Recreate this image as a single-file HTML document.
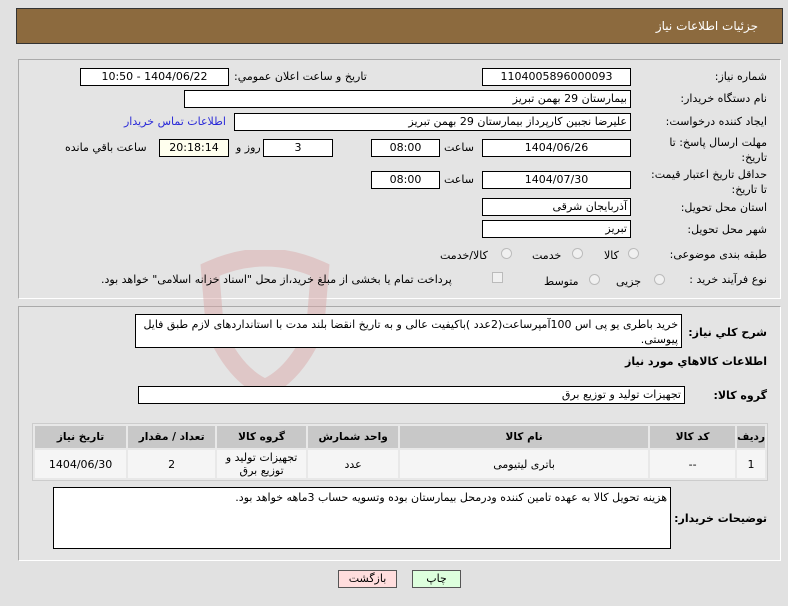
<!DOCTYPE html><html><head><meta charset="utf-8"><style>
*{margin:0;padding:0;box-sizing:border-box}
body{width:788px;height:606px;background:#e1e1e1;font-family:"DejaVu Sans","Liberation Sans",sans-serif;font-size:11px;color:#000;position:relative;overflow:hidden}
.a{position:absolute;white-space:nowrap}
.hdr{left:16px;top:8px;width:767px;height:36px;background:#8c6a3e;border:1px solid #333}
.hdr span{position:absolute;right:24px;top:10px;color:#fff;font-size:12px}
.pn{border:1px solid #aaa;border-right-color:#fff;border-bottom-color:#fff;background:#e4e4e4}
.bx{position:absolute;background:#fff;border:1px solid #000;height:18px;line-height:16px;text-align:center;direction:rtl;white-space:nowrap;overflow:hidden}
.r{text-align:right;padding-right:3px}
.l{direction:rtl;text-align:right}
.b{font-weight:bold;font-size:11px}
.rd{position:absolute;width:11px;height:11px;border-radius:50%;border:1px solid #bbb;background:#f0f0f0}
table{border-collapse:separate;border-spacing:2px;position:absolute;left:32px;top:423px;width:736px;background:#e8e8e8;border:1px solid #ccc;direction:rtl}
th{background:#c8c8c8;height:22px;font-weight:bold;font-size:10.5px}
td{background:#f5f5f5;height:28px;text-align:center;font-size:11px;line-height:13px}
.btn{position:absolute;top:570px;height:18px;border:1px solid #555;text-align:center;line-height:16px}
</style></head><body>
<div class="a hdr"><span>جزئیات اطلاعات نیاز</span></div>
<div class="a pn" style="left:18px;top:59px;width:763px;height:240px"></div>
<div class="a pn" style="left:18px;top:306px;width:763px;height:255px"></div>
<svg class="a" style="left:200px;top:250px" width="130" height="140"><path d="M10 20 Q65 -5 120 20 L115 80 Q95 125 65 138 Q35 125 15 80 Z" fill="none" stroke="#d9a3a3" stroke-width="18" opacity=".45"/></svg>

<div class="a l" style="right:21px;top:70px">شماره نیاز:</div>
<div class="bx" style="left:482px;top:68px;width:149px">1104005896000093</div>
<div class="a l" style="left:234px;top:70px">تاریخ و ساعت اعلان عمومي:</div>
<div class="bx" style="left:80px;top:68px;width:149px">1404/06/22 - 10:50</div>

<div class="a l" style="right:21px;top:92px">نام دستگاه خریدار:</div>
<div class="bx r" style="left:184px;top:90px;width:447px">بیمارستان 29 بهمن تبریز</div>

<div class="a l" style="right:21px;top:115px">ایجاد کننده درخواست:</div>
<div class="bx r" style="left:234px;top:113px;width:397px">علیرضا نجبین کارپرداز بیمارستان 29 بهمن تبریز</div>
<div class="a l" style="left:124px;top:115px;color:#2a2ad8">اطلاعات تماس خریدار</div>

<div class="a l" style="right:21px;top:136px">مهلت ارسال پاسخ: تا</div>
<div class="a l" style="right:21px;top:151px">تاریخ:</div>
<div class="bx" style="left:482px;top:139px;width:149px">1404/06/26</div>
<div class="a l" style="left:444px;top:141px">ساعت</div>
<div class="bx" style="left:371px;top:139px;width:69px">08:00</div>
<div class="bx" style="left:263px;top:139px;width:70px">3</div>
<div class="a l" style="left:236px;top:141px">روز و</div>
<div class="bx" style="left:159px;top:139px;width:70px;background:#ffffee">20:18:14</div>
<div class="a l" style="left:65px;top:141px">ساعت باقي مانده</div>

<div class="a l" style="right:21px;top:168px">حداقل تاریخ اعتبار قیمت:</div>
<div class="a l" style="right:21px;top:183px">تا تاریخ:</div>
<div class="bx" style="left:482px;top:171px;width:149px">1404/07/30</div>
<div class="a l" style="left:444px;top:173px">ساعت</div>
<div class="bx" style="left:371px;top:171px;width:69px">08:00</div>

<div class="a l" style="right:21px;top:201px">استان محل تحویل:</div>
<div class="bx r" style="left:482px;top:198px;width:149px">آذربایجان شرقی</div>
<div class="a l" style="right:21px;top:223px">شهر محل تحویل:</div>
<div class="bx r" style="left:482px;top:220px;width:149px">تبریز</div>

<div class="a l" style="right:21px;top:248px">طبقه بندی موضوعی:</div>
<div class="rd" style="left:628px;top:248px"></div><div class="a l" style="left:604px;top:249px">کالا</div>
<div class="rd" style="left:572px;top:248px"></div><div class="a l" style="left:532px;top:249px">خدمت</div>
<div class="rd" style="left:501px;top:248px"></div><div class="a l" style="left:440px;top:249px">کالا/خدمت</div>

<div class="a l" style="right:21px;top:273px">نوع فرآیند خرید :</div>
<div class="rd" style="left:654px;top:274px"></div><div class="a l" style="left:616px;top:275px">جزیی</div>
<div class="rd" style="left:589px;top:274px"></div><div class="a l" style="left:544px;top:275px">متوسط</div>
<div class="a" style="left:492px;top:272px;width:11px;height:11px;border:1px solid #bbb;background:#f0f0f0"></div>
<div class="a l" style="left:101px;top:273px">پرداخت تمام یا بخشی از مبلغ خرید،از محل "اسناد خزانه اسلامی" خواهد بود.</div>

<div class="a l b" style="right:21px;top:326px">شرح کلي نیاز:</div>
<div class="a" style="left:135px;top:314px;width:547px;height:34px;background:#fff;border:1px solid #000;direction:rtl;text-align:right;padding:2px 3px;line-height:15px;white-space:normal">خرید باطری یو پی اس 100آمپرساعت(2عدد )باکیفیت عالی و به تاریخ  انقضا بلند مدت با استانداردهای لازم طبق فایل پیوستی.</div>
<div class="a l b" style="right:21px;top:355px">اطلاعات کالاهاي مورد نیاز</div>
<div class="a l b" style="right:21px;top:389px">گروه کالا:</div>
<div class="bx r" style="left:138px;top:386px;width:547px">تجهیزات تولید و توزیع برق</div>

<table><tr><th style="width:26px">ردیف</th><th style="width:85px">کد کالا</th><th style="width:248px">نام کالا</th><th style="width:90px">واحد شمارش</th><th style="width:89px">گروه کالا</th><th style="width:87px">تعداد / مقدار</th><th>تاریخ نیاز</th></tr>
<tr><td>1</td><td>--</td><td>باتری لیتیومی</td><td>عدد</td><td>تجهیزات تولید و<br>توزیع برق</td><td>2</td><td>1404/06/30</td></tr></table>

<div class="a l b" style="right:21px;top:512px">توضیحات خریدار:</div>
<div class="a" style="left:53px;top:487px;width:618px;height:62px;background:#fff;border:1px solid #000;direction:rtl;text-align:right;padding:3px 3px">هزینه تحویل کالا به عهده تامین کننده ودرمحل بیمارستان بوده وتسویه حساب 3ماهه خواهد بود.</div>

<div class="btn" style="left:338px;width:59px;background:#fdd">بازگشت</div>
<div class="btn" style="left:412px;width:49px;background:#dfd">چاپ</div>
</body></html>
